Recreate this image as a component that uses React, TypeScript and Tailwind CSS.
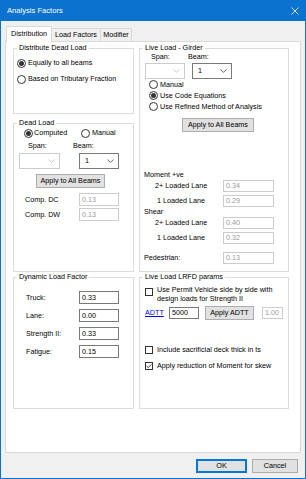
import React from "react";

function Radio({ checked }: { checked?: boolean }) {
  return (
    <span className="w-[9px] h-[9px] rounded-full border border-[#333333] bg-white flex items-center justify-center shrink-0">
      {checked && <span className="w-[5px] h-[5px] rounded-full bg-[#333333]" />}
    </span>
  );
}

function Check({ checked }: { checked?: boolean }) {
  return (
    <span className="w-[8px] h-[8px] border border-[#333333] bg-white shrink-0 flex items-center justify-center">
      {checked && (
        <svg width="6" height="6" viewBox="0 0 6 6">
          <path d="M0.6 3 L2.3 4.7 L5.4 1.2" stroke="#333333" fill="none" strokeWidth="0.9" />
        </svg>
      )}
    </span>
  );
}

function Chevron({ color }: { color: string }) {
  return (
    <svg width="7" height="4" viewBox="0 0 7 4">
      <path d="M0.5 0.5 L3.5 3.3 L6.5 0.5" stroke={color} fill="none" strokeWidth="0.8" />
    </svg>
  );
}

function Combo({ enabled, className }: { enabled?: boolean; className: string }) {
  return (
    <div
      className={`h-[16px] bg-white border flex items-center justify-between pl-[5px] pr-[4px] ${
        enabled ? "border-[#7a7a7a]" : "border-[#cccccc]"
      } ${className}`}
    >
      <span>{enabled ? "1" : ""}</span>
      <Chevron color={enabled ? "#444444" : "#bdbdbd"} />
    </div>
  );
}

function Field({ value, disabled, className }: { value: string; disabled?: boolean; className: string }) {
  return (
    <div
      className={`bg-white border flex items-center pl-[2px] ${
        disabled ? "border-[#cccccc] text-[#9a9a9a]" : "border-[#7a7a7a] text-black"
      } ${className}`}
    >
      {value}
    </div>
  );
}

function Btn({ children, className }: { children: React.ReactNode; className: string }) {
  return (
    <div className={`bg-[#e1e1e1] border border-[#adadad] flex items-center justify-center ${className}`}>
      {children}
    </div>
  );
}

export default function App() {
  return (
    <div className="w-[306px] h-[479px] bg-[#0b72cf] flex flex-col text-[7.2px] leading-none text-black font-['Liberation_Sans',Arial,sans-serif]">
      {/* Title bar */}
      <div className="h-[21px] shrink-0 flex items-center justify-between pl-[7px] pr-[7px]">
        <span className="text-white text-[7.6px]">Analysis Factors</span>
        <svg width="8" height="8" viewBox="0 0 8 8">
          <path d="M0.5 0.5 L7.5 7.5 M7.5 0.5 L0.5 7.5" stroke="white" strokeWidth="0.8" />
        </svg>
      </div>

      {/* Body */}
      <div className="flex-1 mx-[1px] mb-[1px] bg-[#f0f0f0] flex flex-col">
        {/* Tabs */}
        <div className="h-[20px] shrink-0 flex items-end pl-[5px]">
          <div className="relative z-10 -mb-[1px] h-[16px] w-[46px] bg-white border-x border-t border-[#d9d9d9] flex items-center justify-center pb-[1px]">
            Distribution
          </div>
          <div className="h-[13px] w-[49px] border-t border-r border-[#d9d9d9] flex items-center justify-center">
            Load Factors
          </div>
          <div className="h-[13px] w-[31px] border-t border-r border-[#d9d9d9] flex items-center justify-center">
            Modifier
          </div>
        </div>

        {/* Panel */}
        <div className="ml-[4px] w-[296px] h-[412px] shrink-0 bg-white border border-[#d9d9d9] pt-[2px] pl-[7px] flex gap-[5px]">
          {/* Left column */}
          <div className="w-[121px] flex flex-col">
            <fieldset className="h-[70px] border border-[#dcdcdc] min-w-0">
              <legend className="ml-[3px] px-[2px] leading-[8px]">Distribute Dead Load</legend>
              <div className="pl-[3px] pt-[5px] flex flex-col gap-[4px]">
                <div className="h-[12px] flex items-center gap-[2px]">
                  <Radio checked />
                  <span>Equally to all beams</span>
                </div>
                <div className="h-[12px] flex items-center gap-[2px]">
                  <Radio />
                  <span>Based on Tributary Fraction</span>
                </div>
              </div>
            </fieldset>

            <fieldset className="mt-[5px] h-[153px] border border-[#dcdcdc] min-w-0">
              <legend className="ml-[3px] px-[2px] leading-[8px]">Dead Load</legend>
              <div className="flex flex-col">
                <div className="h-[12px] flex items-center pl-[10px]">
                  <div className="w-[57px] flex items-center gap-[1px]">
                    <Radio checked />
                    <span>Computed</span>
                  </div>
                  <div className="flex items-center gap-[2px]">
                    <Radio />
                    <span>Manual</span>
                  </div>
                </div>
                <div className="mt-[2px] h-[10px] flex items-center pl-[14px]">
                  <span className="w-[45px]">Span:</span>
                  <span>Beam:</span>
                </div>
                <div className="mt-[2px] flex pl-[5px]">
                  <Combo className="w-[41px]" />
                  <Combo enabled className="ml-[19px] w-[40px]" />
                </div>
                <Btn className="mt-[5px] ml-[22px] w-[69px] h-[14px]">Apply to All Beams</Btn>
                <div className="mt-[5px] h-[13px] flex items-center pl-[11px]">
                  <span className="w-[54px]">Comp. DC</span>
                  <Field value="0.13" disabled className="w-[40px] h-full" />
                </div>
                <div className="mt-[2px] h-[13px] flex items-center pl-[11px]">
                  <span className="w-[54px]">Comp. DW</span>
                  <Field value="0.13" disabled className="w-[40px] h-full" />
                </div>
              </div>
            </fieldset>

            <fieldset className="mt-[1px] h-[136px] border border-[#dcdcdc] min-w-0">
              <legend className="ml-[3px] px-[2px] leading-[8px]">Dynamic Load Factor</legend>
              <div className="pt-[10px] pl-[12px] flex flex-col gap-[5px]">
                {[
                  ["Truck:", "0.33"],
                  ["Lane:", "0.00"],
                  ["Strength II:", "0.33"],
                  ["Fatigue:", "0.15"],
                ].map(([l, v]) => (
                  <div key={l} className="h-[13px] flex items-center">
                    <span className="w-[53px]">{l}</span>
                    <Field value={v} className="w-[40px] h-full" />
                  </div>
                ))}
              </div>
            </fieldset>
          </div>

          {/* Right column */}
          <div className="w-[150px] flex flex-col">
            <fieldset className="h-[228px] border border-[#dcdcdc] min-w-0">
              <legend className="ml-[3px] px-[2px] leading-[8px]">Live Load - Girder</legend>
              <div className="flex flex-col">
                <div className="h-[9px] flex items-center pl-[11px]">
                  <span className="w-[37px]">Span:</span>
                  <span>Beam:</span>
                </div>
                <div className="mt-[2px] flex pl-[5px]">
                  <Combo className="w-[40px]" />
                  <Combo enabled className="ml-[7px] w-[40px]" />
                </div>
                <div className="h-[11px] flex items-center pl-[9px] gap-[2px]">
                  <Radio />
                  <span>Manual</span>
                </div>
                <div className="h-[11px] flex items-center pl-[9px] gap-[2px]">
                  <Radio checked />
                  <span>Use Code Equations</span>
                </div>
                <div className="h-[11px] flex items-center pl-[9px] gap-[2px]">
                  <Radio />
                  <span>Use Refined Method of Analysis</span>
                </div>
                <Btn className="mt-[6px] ml-[42px] w-[72px] h-[14px]">Apply to All Beams</Btn>

                <div className="mt-[38px] h-[10px] flex items-center pl-[4px]">Moment +ve</div>
                <div className="h-[12px] flex items-center">
                  <span className="w-[83px] pl-[15px]">2+ Loaded Lane</span>
                  <Field value="0.34" disabled className="w-[51px] h-full" />
                </div>
                <div className="mt-[3px] h-[12px] flex items-center">
                  <span className="w-[83px] pl-[17px]">1 Loaded Lane</span>
                  <Field value="0.29" disabled className="w-[51px] h-full" />
                </div>
                <div className="h-[10px] flex items-center pl-[4px]">Shear</div>
                <div className="h-[12px] flex items-center">
                  <span className="w-[83px] pl-[15px]">2+ Loaded Lane</span>
                  <Field value="0.40" disabled className="w-[51px] h-full" />
                </div>
                <div className="mt-[3px] h-[12px] flex items-center">
                  <span className="w-[83px] pl-[17px]">1 Loaded Lane</span>
                  <Field value="0.32" disabled className="w-[51px] h-full" />
                </div>
                <div className="mt-[8px] h-[12px] flex items-center">
                  <span className="w-[83px] pl-[4px]">Pedestrian:</span>
                  <Field value="0.13" disabled className="w-[51px] h-full" />
                </div>
              </div>
            </fieldset>

            <fieldset className="mt-[1px] h-[136px] border border-[#dcdcdc] min-w-0">
              <legend className="ml-[3px] px-[2px] leading-[8px]">Live Load LRFD params</legend>
              <div className="flex flex-col">
                <div className="pt-[4px] pl-[5px] flex items-start">
                  <span className="mt-[3px]">
                    <Check />
                  </span>
                  <div className="ml-[4px] leading-[9px]">
                    <div>Use Permit Vehicle side by side with</div>
                    <div>design loads for Strength II</div>
                  </div>
                </div>
                <div className="mt-[3px] h-[14px] flex items-center pl-[5px]">
                  <span className="w-[20px] text-[#0000ff] underline">ADTT</span>
                  <Field value="5000" className="ml-[4px] w-[30px] h-[12px]" />
                  <Btn className="ml-[6px] w-[49px] h-[14px]">Apply ADTT</Btn>
                  <Field value="1.00" disabled className="ml-[8px] w-[21px] h-[12px]" />
                </div>
                <div className="mt-[25px] h-[10px] flex items-center pl-[5px] gap-[4px]">
                  <Check />
                  <span>Include sacrificial deck thick in ts</span>
                </div>
                <div className="mt-[6px] h-[10px] flex items-center pl-[5px] gap-[4px]">
                  <Check checked />
                  <span>Apply reduction of Moment for skew</span>
                </div>
              </div>
            </fieldset>
          </div>
        </div>

        {/* Buttons */}
        <div className="mt-[6px] h-[14px] flex justify-end gap-[5px] pr-[7px]">
          <div className="w-[51px] h-full bg-[#e1e1e1] border border-[#0078d7] shadow-[inset_0_0_0_1px_#0078d7] flex items-center justify-center">
            OK
          </div>
          <Btn className="w-[46px] h-full">Cancel</Btn>
        </div>
      </div>
    </div>
  );
}
